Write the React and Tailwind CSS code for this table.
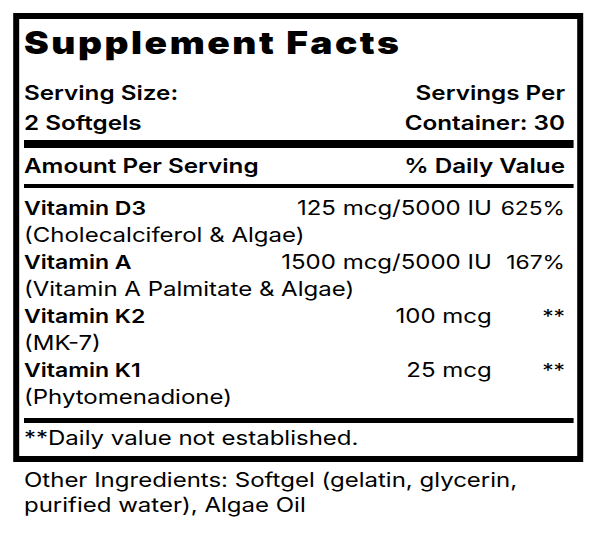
export default function App() {
  const rows = [
    { name: "Vitamin D3", sub: "(Cholecalciferol & Algae)", amt: "125 mcg/5000 IU", dv: "625%" },
    { name: "Vitamin A", sub: "(Vitamin A Palmitate & Algae)", amt: "1500 mcg/5000 IU", dv: "167%" },
    { name: "Vitamin K2", sub: "(MK-7)", amt: "100 mcg", dv: "**" },
    { name: "Vitamin K1", sub: "(Phytomenadione)", amt: "25 mcg", dv: "**" },
  ];
  return (
    <div className="bg-white w-[600px] h-[538px] overflow-hidden">
      <div
        className="w-[500px] origin-top-left scale-x-[1.2] pt-[13px] pl-[10.83px] text-black"
        style={{ fontFamily: "Inter, 'Noto Sans', sans-serif" }}
      >
        <div className="w-[475px] border-x-[5px] border-y-[6px] border-black pl-[4.17px] pr-[3.33px]">
          <div className="text-[31px] font-black tracking-[2.1px] leading-[44px] pt-[2px] pb-[13px]">Supplement Facts</div>
          <div className="flex justify-between text-[20.2px] font-semibold leading-[30px] pr-[6.67px]">
            <div>
              <div>Serving Size:</div>
              <div>2 Softgels</div>
            </div>
            <div className="text-right">
              <div>Servings Per</div>
              <div>Container: 30</div>
            </div>
          </div>
          <div className="h-[8px] bg-black mt-[2px]" />
          <div className="flex justify-between text-[20.2px] font-semibold leading-[36px] pr-[6.67px]">
            <span>Amount Per Serving</span>
            <span>% Daily Value</span>
          </div>
          <div className="h-[4px] bg-black" />
          <div className="pt-[7px] text-[20px] leading-[27px] pr-[6.67px]">
            {rows.map((r) => (
              <div key={r.name}>
                <div className="flex items-baseline">
                  <span className="flex-1 text-[19.2px] font-semibold">{r.name}</span>
                  <span className="text-right">{r.amt}</span>
                  <span className="w-[61px] text-right text-[19px]">{r.dv}</span>
                </div>
                <div>{r.sub}</div>
              </div>
            ))}
          </div>
          <div className="h-[5px] bg-black mt-[7px]" />
          <div className="text-[20px] leading-[27px] pt-[2px] pb-[4px]">**Daily value not established.</div>
        </div>
        <div className="pl-[9.17px] pt-[6px] text-[20px] leading-[25px]">
          Other Ingredients: Softgel (gelatin, glycerin,
          <br />
          purified water), Algae Oil
        </div>
      </div>
    </div>
  );
}
